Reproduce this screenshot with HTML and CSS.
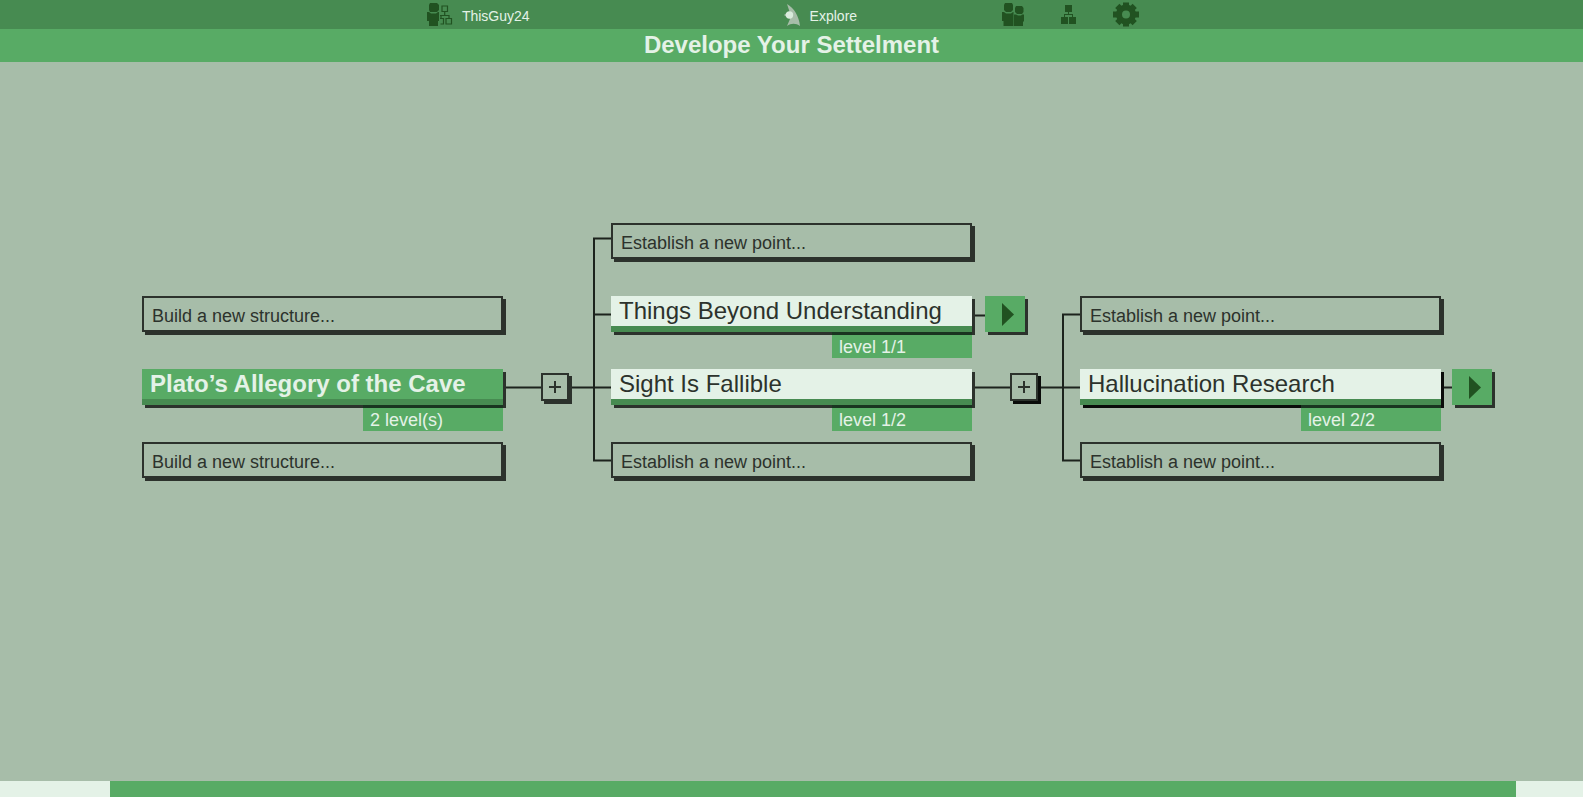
FILE: index.html
```html
<!DOCTYPE html>
<html lang="en">
<head>
<meta charset="utf-8">
<title>Develope Your Settelment</title>
<link rel="stylesheet" href="styles.css">
</head>
<body>
<nav class="nav">
  <a class="nav-link profile" href="#">
    <svg width="26" height="25" viewBox="0 0 26 25" fill="#215221"><path d="M3 1h7l2 2v5l-2 2H3L2 8V3zM0 10h2l2 1.500h5L11 10h1v9h-1v5H2v-5H0z"/><path d="M15 4h5.500v5.500H15zM17.700 10v3M13 13.500h9v3M14 13.500v3M13 16.500h3.500v5.500H13.500M19 16.500h5.500V22H19z" fill="none" stroke="#215221" stroke-width="1.200"/></svg>
    <span>ThisGuy24</span>
  </a>
  <a class="nav-link explore" href="#">
    <svg width="17" height="23" viewBox="0 0 17 23"><path d="M3 0c7 4 12 12 13 22-4-3-9-3-13 0l3-7V9z" fill="#a7bda9"/><path d="M0 11l4-3v6z" fill="#a7bda9"/><circle cx="5.500" cy="11" r="3.700" fill="#d9ebdc"/></svg>
    <span>Explore</span>
  </a>
  <div class="tools">
    <a class="tool" href="#" aria-label="Friends"><svg width="22" height="25" viewBox="0 0 22 25" fill="#215221"><path d="M3 1h7l1 2v5l-2 2H4L2 8V3zM0 10h2l2 1.500h5L11 10h.500v14H1.500v-5H0zM14 4h6l1.500 2v4L20 12h-5l-2-2V6zM12 12.500h2l2 1h3l1-1h2v7h-1V24h-9z"/></svg></a>
    <a class="tool" href="#" aria-label="Structures"><svg width="15" height="19" viewBox="0 0 15 19" fill="#215221"><path d="M4 0h7v7H8v2h4v3h3v7H8v-7h3v-2H4v2h3v7H0v-7h3V9h4V7H4z"/></svg></a>
    <a class="tool" href="#" aria-label="Settings"><svg width="26" height="25" viewBox="-13 -12.500 26 25" fill="none" stroke="#215221"><circle r="7" stroke-width="6"/><path d="M0-12v4M0 8v4M-13 0h5M8 0h5M-8.700-8.700l3 3M8.700-8.700l-3 3M-8.700 8.700l3-3M8.700 8.700l-3-3" stroke-width="6"/></svg></a>
  </div>
</nav>
<header class="title"><h1>Develope Your Settelment</h1></header>
<main class="main">
  <div class="board">
    <svg class="wires wires-a" width="108" height="255" viewBox="0 0 108 255"><path d="M0 164.500h108M91 15v222M90 15.500h18M91 91.500h17M90 237.500h18"/></svg>
    <svg class="wires wires-b" width="108" height="255" viewBox="0 0 108 255"><path d="M0 92.500h14M0 164.500h108M91 91v146M90 91.500h18M90 237.500h18"/></svg>
    <svg class="wires wires-c" width="12" height="255" viewBox="0 0 12 255"><path d="M0 164.500h12"/></svg>

    <input class="entry col-1 row-2" type="text" placeholder="Build a new structure..." aria-label="Build a new structure above">
    <article class="node root col-1 row-3"><h2>Plato’s Allegory of the Cave</h2><p>2 level(s)</p></article>
    <input class="entry col-1 row-4" type="text" placeholder="Build a new structure..." aria-label="Build a new structure below">

    <button class="add gap-1 row-3" aria-label="Add point"><svg width="12" height="12" viewBox="0 0 12 12"><path d="M6 0v12M0 6h12"/></svg></button>

    <input class="entry col-2 row-1" type="text" placeholder="Establish a new point..." aria-label="Establish a new point above">
    <article class="node col-2 row-2"><h2>Things Beyond Understanding</h2><p>level 1/1</p></article>
    <article class="node col-2 row-3"><h2>Sight Is Fallible</h2><p>level 1/2</p></article>
    <input class="entry col-2 row-4" type="text" placeholder="Establish a new point..." aria-label="Establish a new point below">

    <button class="play gap-2 row-2" aria-label="Open Things Beyond Understanding"><svg width="12" height="23" viewBox="0 0 12 23"><path d="M0 0l12 11.500L0 23z"/></svg></button>
    <button class="add deep gap-2 row-3" aria-label="Add research point"><svg width="12" height="12" viewBox="0 0 12 12"><path d="M6 0v12M0 6h12"/></svg></button>

    <input class="entry col-3 row-2" type="text" placeholder="Establish a new point..." aria-label="Establish a research point above">
    <article class="node deep col-3 row-3"><h2>Hallucination Research</h2><p>level 2/2</p></article>
    <input class="entry col-3 row-4" type="text" placeholder="Establish a new point..." aria-label="Establish a research point below">
    <button class="play last gap-3 row-3" aria-label="Open Hallucination Research"><svg width="12" height="23" viewBox="0 0 12 23"><path d="M0 0l12 11.500L0 23z"/></svg></button>
  </div>
</main>
<footer class="footer"><div class="footer-bar"></div></footer>
</body>
</html>
```

FILE: styles.css
```css
:root {
  --sage: #a7bda9;
  --green: #58ab65;
  --moss: #478b51;
  --forest: #215221;
  --mint: #e4f2e7;
  --ink: #2c322c;
}

* { box-sizing: border-box; }

body {
  margin: 0;
  min-height: 100vh;
  display: flex;
  flex-direction: column;
  background: var(--sage);
  color: var(--ink);
  font-family: "Liberation Sans", Arial, sans-serif;
}

h1, h2, p { margin: 0; }
svg { display: block; flex: none; }
button { padding: 0; cursor: pointer; }

.nav {
  display: flex;
  justify-content: center;
  height: 29px;
  padding-right: 17px;
  background: var(--moss);
}

.nav-link {
  display: flex;
  align-items: center;
  gap: 9px;
  color: var(--mint);
  font-size: 14px;
  line-height: 16px;
  text-decoration: none;
}

.nav-link span { padding-top: 3px; }
.profile { margin-right: 254px; }
.explore { margin-right: 145px; }
.explore svg { margin-top: 2px; }

.tools {
  display: flex;
  align-items: center;
  gap: 37px;
}

.tool { padding-bottom: 1px; }

.title {
  background: var(--green);
  color: var(--mint);
  text-align: center;
}

.title h1 {
  padding-bottom: 2px;
  font-size: 24px;
  line-height: 31px;
}

.main {
  flex: 1;
  padding: 161px 88px 0 142px;
}

.board {
  display: grid;
  grid-template-columns: 1fr 108px 1fr 108px 1fr 54px;
  grid-auto-rows: 73px;
  align-items: start;
}

.col-1 { grid-column: 1; }
.gap-1 { grid-column: 2; }
.col-2 { grid-column: 3; }
.gap-2 { grid-column: 4; }
.col-3 { grid-column: 5; }
.gap-3 { grid-column: 6; }
.row-1 { grid-row: 1; }
.row-2 { grid-row: 2; }
.row-3 { grid-row: 3; }
.row-4 { grid-row: 4; }

.wires {
  grid-row: 1 / span 4;
  fill: none;
  stroke: #1c231d;
  stroke-width: 2;
}

.wires-a { grid-column: 2; }
.wires-b { grid-column: 4; }
.wires-c { grid-column: 6; }

.entry {
  width: 100%;
  min-width: 0;
  height: 36px;
  padding: 4px 8px 0;
  border: 2px solid var(--ink);
  border-radius: 0;
  background: var(--sage);
  box-shadow: 3px 3px 0 var(--ink);
  color: var(--ink);
  font: 18px/24px "Liberation Sans", Arial, sans-serif;
}

.entry::placeholder { color: var(--ink); opacity: 1; }

.node h2 {
  padding: 0 8px;
  border-bottom: 6px solid var(--moss);
  background: var(--mint);
  box-shadow: 3px 3px 0 var(--ink);
  font-size: 24px;
  font-weight: 400;
  line-height: 30px;
  white-space: nowrap;
}

.node p {
  width: 140px;
  margin-left: auto;
  padding: 4px 7px 0;
  background: var(--green);
  box-shadow: inset 0 3px 0 #193420;
  color: var(--mint);
  font-size: 18px;
  line-height: 22px;
}

.root h2 {
  background: var(--green);
  color: var(--mint);
  font-weight: 700;
}

.add {
  display: grid;
  place-items: center;
  width: 28px;
  height: 28px;
  margin: 4px 0 0 38px;
  border: 2px solid var(--ink);
  background: var(--sage);
  box-shadow: 3px 3px 0 var(--ink);
}

.add path { stroke: var(--ink); stroke-width: 2; }

.play {
  display: grid;
  place-items: center;
  width: 40px;
  height: 36px;
  margin-left: 13px;
  padding-left: 6px;
  border: 0;
  background: var(--green);
  box-shadow: 3px 3px 0 var(--ink);
}

.play path { fill: var(--forest); }
.play.last { margin-left: 11px; }

.add.deep,
.deep h2 { box-shadow: 3px 3px 0 #0a0c0a; }

.footer {
  padding: 0 67px 0 110px;
  background: var(--mint);
}

.footer-bar {
  height: 16px;
  background: var(--green);
}
```
